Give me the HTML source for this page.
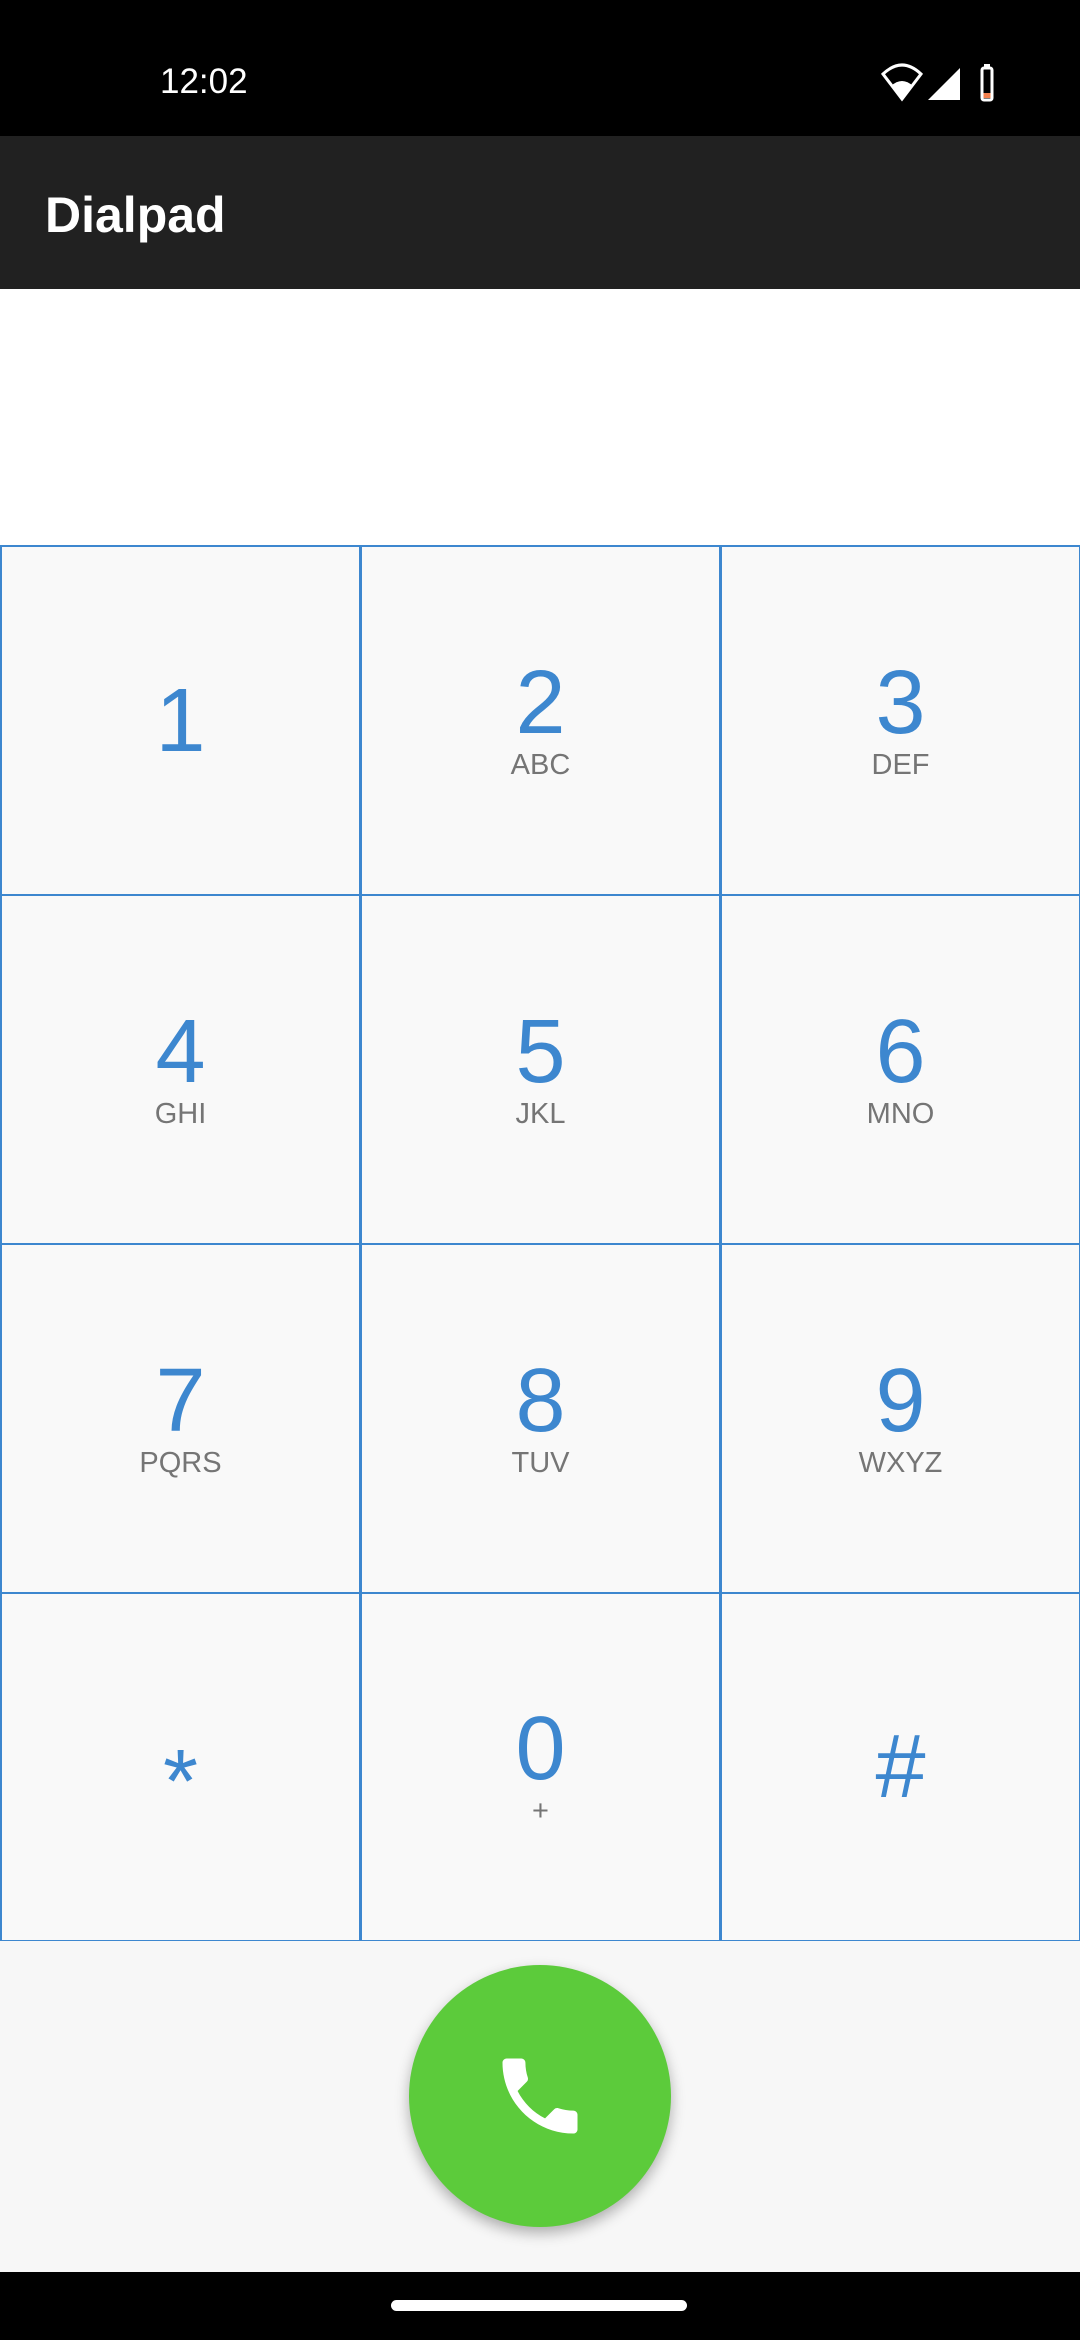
<!DOCTYPE html>
<html><head><meta charset="utf-8"><style>
*{margin:0;padding:0;box-sizing:border-box}
body{width:1080px;height:2340px;position:relative;background:#f7f7f7;font-family:"Liberation Sans",sans-serif;overflow:hidden}
#sb{position:absolute;top:0;left:0;width:1080px;height:136px;background:#000}
#time{position:absolute;left:160px;top:62px;color:#fff;font-size:35px}
#ab{position:absolute;top:136px;left:0;width:1080px;height:153px;background:#212121;box-shadow:0 3px 6px rgba(0,0,0,.25)}
#ab span{position:absolute;left:45px;top:50px;color:#fff;font-size:50px;font-weight:bold}
#disp{position:absolute;top:289px;left:0;width:1080px;height:257px;background:#fff}
#grid{position:absolute;top:546px;left:0;width:1080px;height:1395px;display:grid;grid-template-columns:360px 360px 360px;grid-template-rows:349px 349px 349px 348px}
.k{border:2px solid #3d87cf;margin:-1px 0 0 0;background:#f9f9f9;display:flex;flex-direction:column;align-items:center;justify-content:center;border-width:2px 1px 1px 2px}
.d{color:#3d87cf;font-size:90px;line-height:84px}
.l{color:#757575;font-size:29px;line-height:32px;margin-top:4px}
#call{position:absolute;left:409px;top:1965px;width:262px;height:262px;border-radius:50%;background:#5ccb3b;box-shadow:0 6px 14px rgba(0,0,0,.3)}
#nav{position:absolute;top:2272px;left:0;width:1080px;height:68px;background:#000}
#pill{position:absolute;left:391px;top:2300px;width:296px;height:11px;border-radius:6px;background:#fff}
</style></head><body>
<div id="sb"><div id="time">12:02</div>
<svg style="position:absolute;left:880px;top:62px" width="160" height="40" viewBox="0 0 160 40">
<path d="M3 12 Q22 -6 41 12 L22 37 Z" fill="none" stroke="#fff" stroke-width="3"/>
<path d="M11 24 Q22 14 33 24 L22 37 Z" fill="#fff"/>
<path d="M48 38 L80 6 L80 38 Z" fill="#fff"/>
<rect x="102" y="6" width="10" height="32" rx="2" fill="none" stroke="#fff" stroke-width="3"/>
<rect x="104" y="2" width="6" height="4" fill="#fff"/>
<rect x="103.5" y="31" width="7" height="5" fill="#f4804d"/>
</svg></div>
<div id="ab"><span>Dialpad</span></div>
<div id="disp"></div>
<div id="grid">
<div class="k"><div class="d">1</div></div>
<div class="k"><div class="d">2</div><div class="l">ABC</div></div>
<div class="k"><div class="d">3</div><div class="l">DEF</div></div>
<div class="k"><div class="d">4</div><div class="l">GHI</div></div>
<div class="k"><div class="d">5</div><div class="l">JKL</div></div>
<div class="k"><div class="d">6</div><div class="l">MNO</div></div>
<div class="k"><div class="d">7</div><div class="l">PQRS</div></div>
<div class="k"><div class="d">8</div><div class="l">TUV</div></div>
<div class="k"><div class="d">9</div><div class="l">WXYZ</div></div>
<div class="k"><div class="d" style="margin-top:30px">*</div></div>
<div class="k"><div class="d">0</div><div class="l">+</div></div>
<div class="k"><div class="d">#</div></div>
</div>
<div id="call"><svg style="position:absolute;left:81px;top:81px" width="100" height="100" viewBox="0 0 24 24"><path fill="#fff" d="M6.62 10.79c1.44 2.83 3.76 5.14 6.59 6.59l2.2-2.2c.27-.27.67-.36 1.020-.24 1.12.37 2.33.57 3.57.57.55 0 1 .45 1 1V20c0 .55-.45 1-1 1-9.39 0-17-7.610-17-17 0-.55.45-1 1-1h3.5c.55 0 1 .45 1 1 0 1.25.2 2.45.57 3.57.11.35.03.74-.25 1.020l-2.2 2.2z"/></svg></div>
<div id="nav"></div><div id="pill"></div>
</body></html>
